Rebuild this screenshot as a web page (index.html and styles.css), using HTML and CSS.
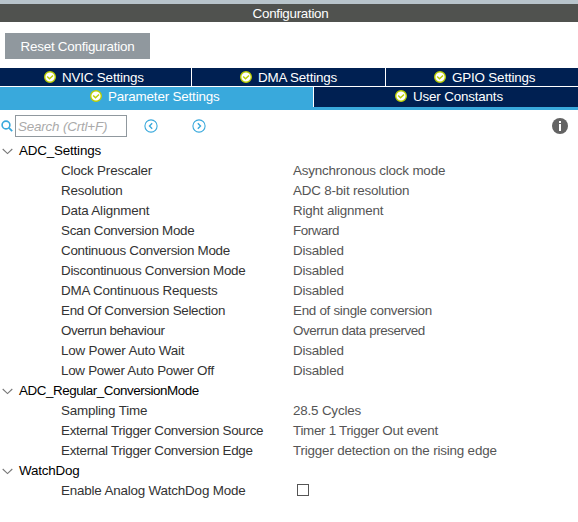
FILE: index.html
```html
<!DOCTYPE html>
<html lang="en">
<head>
<meta charset="utf-8">
<title>Configuration</title>
<link rel="stylesheet" href="styles.css">
</head>
<body>
<svg class="symbols" aria-hidden="true">
  <symbol id="ok" viewBox="0 0 12 12"><circle cx="6" cy="6" r="5.3" fill="#fff" stroke="#bccf00" stroke-width="1.4"/><path d="M3.2 5.6 5.5 7.8 9 4.4" fill="none" stroke="#bccf00" stroke-width="1.4"/></symbol>
  <symbol id="chevron" viewBox="0 0 11 7"><path d="M.7 1 5.5 5.6 10.3 1" fill="none" stroke="#777" stroke-width="1.1"/></symbol>
</svg>
<header class="title">Configuration</header>
<div class="toolbar"><button class="reset">Reset Configuration</button></div>
<nav class="tabs">
  <div class="tab-row three">
    <div class="tab nvic"><svg class="ok"><use href="#ok"/></svg><span>NVIC Settings</span></div>
    <div class="tab dma"><svg class="ok"><use href="#ok"/></svg><span>DMA Settings</span></div>
    <div class="tab gpio"><svg class="ok"><use href="#ok"/></svg><span>GPIO Settings</span></div>
  </div>
  <div class="tab-row two">
    <div class="tab param active"><svg class="ok"><use href="#ok"/></svg><span>Parameter Settings</span></div>
    <div class="tab user"><svg class="ok"><use href="#ok"/></svg><span>User Constants</span></div>
  </div>
</nav>
<div class="search-bar">
  <svg class="magnifier" viewBox="0 0 12 12"><circle cx="5" cy="5" r="3.9" fill="none" stroke="#39a9dc" stroke-width="1.6"/><path d="M7.9 7.9 11.2 11.2" stroke="#39a9dc" stroke-width="1.8"/></svg>
  <div class="search"><span>Search (Crtl+F)</span></div>
  <svg class="nav-icon prev" viewBox="0 0 14 14"><circle cx="7" cy="7" r="6.1" fill="none" stroke="#39a9dc" stroke-width="1.1"/><path d="M8.2 4.3 5.5 7 8.2 9.7" fill="none" stroke="#39a9dc" stroke-width="1.4"/></svg>
  <svg class="nav-icon next" viewBox="0 0 14 14"><circle cx="7" cy="7" r="6.1" fill="none" stroke="#39a9dc" stroke-width="1.1"/><path d="M5.8 4.3 8.5 7 5.8 9.7" fill="none" stroke="#39a9dc" stroke-width="1.4"/></svg>
  <svg class="info" viewBox="0 0 16 16"><circle cx="8" cy="8" r="8" fill="#636363"/><path d="M7 3h2v2H7zM7 6h2v7H7z" fill="#fff"/></svg>
</div>
<main class="tree">
  <div class="group"><svg class="chevron"><use href="#chevron"/></svg><span>ADC_Settings</span></div>
  <div class="row"><span>Clock Prescaler</span><span class="value">Asynchronous clock mode</span></div>
  <div class="row"><span>Resolution</span><span class="value">ADC 8-bit resolution</span></div>
  <div class="row"><span>Data Alignment</span><span class="value">Right alignment</span></div>
  <div class="row"><span class="tight">Scan Conversion Mode</span><span class="value tighter">Forward</span></div>
  <div class="row"><span class="tight">Continuous Conversion Mode</span><span class="value">Disabled</span></div>
  <div class="row"><span class="tight">Discontinuous Conversion Mode</span><span class="value">Disabled</span></div>
  <div class="row"><span>DMA Continuous Requests</span><span class="value">Disabled</span></div>
  <div class="row"><span class="tight">End Of Conversion Selection</span><span class="value tight">End of single conversion</span></div>
  <div class="row"><span class="tighter">Overrun behaviour</span><span class="value tighter">Overrun data preserved</span></div>
  <div class="row"><span>Low Power Auto Wait</span><span class="value">Disabled</span></div>
  <div class="row"><span class="tight">Low Power Auto Power Off</span><span class="value">Disabled</span></div>
  <div class="group"><svg class="chevron"><use href="#chevron"/></svg><span class="tighter">ADC_Regular_ConversionMode</span></div>
  <div class="row"><span>Sampling Time</span><span class="value">28.5 Cycles</span></div>
  <div class="row"><span class="tight">External Trigger Conversion Source</span><span class="value tight">Timer 1 Trigger Out event</span></div>
  <div class="row"><span class="tight">External Trigger Conversion Edge</span><span class="value">Trigger detection on the rising edge</span></div>
  <div class="group"><svg class="chevron"><use href="#chevron"/></svg><span>WatchDog</span></div>
  <div class="row"><span>Enable Analog WatchDog Mode</span><span class="checkbox"></span></div>
</main>
</body>
</html>
```
FILE: styles.css
```css
* { box-sizing: border-box; }
body {
  margin: 0;
  height: 522px;
  overflow: hidden;
  background: #fff;
  font: 13.4px/20px "Liberation Sans", Arial, sans-serif;
  letter-spacing: -.18px;
  color: #333;
}
svg { display: block; flex: none; }
.symbols { position: absolute; width: 0; height: 0; }
.title {
  height: 22px;
  border-top: 4px solid #b8c4cb;
  background: #50524f;
  color: #fff;
  text-align: center;
  line-height: 19px;
  letter-spacing: -.3px;
  padding-left: 3px;
}
.toolbar { height: 46px; padding: 11px 5px 0; }
.reset {
  display: block;
  width: 145px;
  height: 26px;
  border: 0;
  padding: 2px 0 0;
  background: #90989e;
  color: #fff;
  font: inherit;
  letter-spacing: -.24px;
}
.tabs { border-bottom: 3px solid #39a9dc; }
.tab-row { display: grid; column-gap: 1px; }
.three { grid-template-columns: 191px 193px 1fr; height: 18px; margin-bottom: 1px; }
.two { grid-template-columns: 313px 1fr; height: 20px; }
.tab {
  display: flex;
  gap: 6px;
  padding-top: 3px;
  background: #002052;
  color: #fff;
  line-height: 14px;
  letter-spacing: -.17px;
}
.active { background: #39a9dc; }
.ok { width: 12px; height: 12px; }
.nvic { padding-left: 44px; }
.dma { padding-left: 48px; }
.gpio { padding-left: 48px; }
.param { padding-left: 90px; }
.user { padding-left: 81px; }
.search-bar { display: flex; height: 31px; padding: 5px 10px 0 1px; }
.magnifier { width: 12px; height: 12px; margin-top: 5px; }
.search {
  width: 112px;
  height: 22px;
  margin-left: 2px;
  padding-left: 2px;
  border: 1px solid #90989e;
  color: #aaa;
  font-style: italic;
  line-height: 22px;
}
.nav-icon { width: 14px; height: 14px; margin-top: 4px; }
.prev { margin-left: 17px; }
.next { margin-left: 34px; }
.info { width: 16px; height: 16px; margin: 3px 0 0 auto; }
.group { display: flex; align-items: center; gap: 6px; height: 20px; padding-left: 2px; color: #000; }
.chevron { width: 11px; height: 7px; }
.row {
  display: grid;
  grid-template-columns: 232px 1fr;
  height: 20px;
  padding-left: 61px;
}
.value { color: #555; }
.tight { letter-spacing: -.29px; }
.tighter { letter-spacing: -.44px; }
.checkbox { width: 12px; height: 12px; margin: 3px 0 0 4px; border: 1px solid #555; }
```
